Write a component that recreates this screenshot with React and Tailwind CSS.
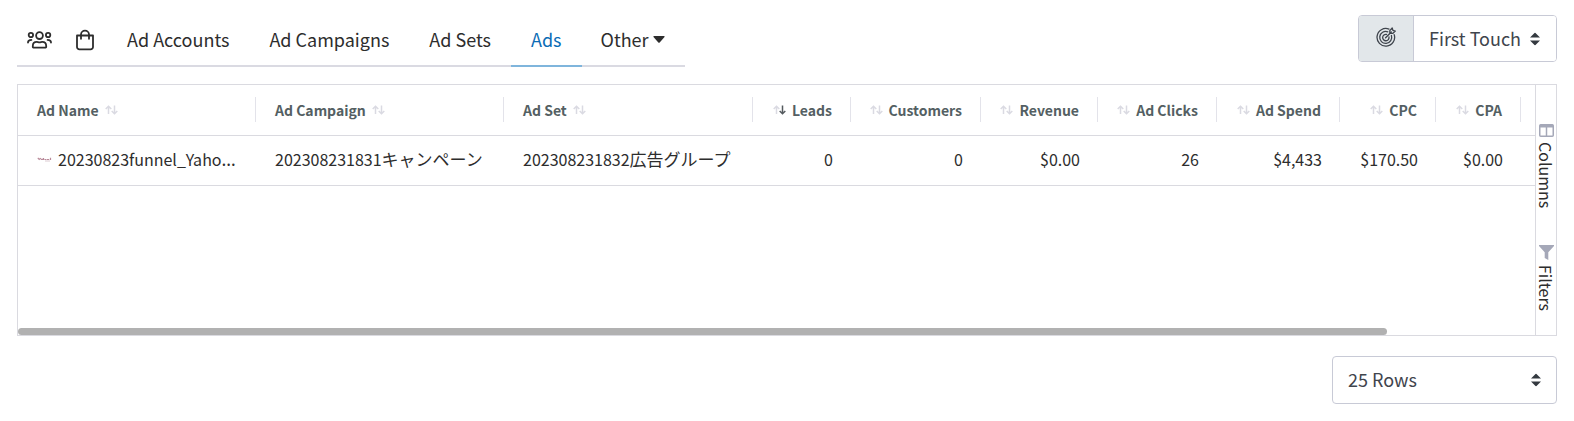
import React from 'react';
import clsx from 'clsx';

const tabs = ['Ad Accounts', 'Ad Campaigns', 'Ad Sets', 'Ads'];

const columns = [
    { label: 'Ad Name', width: 'w-[238px]' },
    { label: 'Ad Campaign', width: 'w-[248px]' },
    { label: 'Ad Set', width: 'w-[249px]' },
    { label: 'Leads', width: 'w-[98px]', numeric: true, sorted: true },
    { label: 'Customers', width: 'w-[130px]', numeric: true },
    { label: 'Revenue', width: 'w-[117px]', numeric: true },
    { label: 'Ad Clicks', width: 'w-[119px]', numeric: true },
    { label: 'Ad Spend', width: 'w-[123px]', numeric: true },
    { label: 'CPC', width: 'w-[96px]', numeric: true },
    { label: 'CPA', width: 'w-[85px]', numeric: true },
];

const numbers = ['0', '0', '$0.00', '26', '$4,433', '$170.50', '$0.00'];

const UsersIcon = () => (
    <svg width="25" height="20" viewBox="0 0 25 20" fill="none" stroke="currentColor" strokeWidth="1.8" strokeLinecap="round" strokeLinejoin="round">
        <circle cx="12.5" cy="5.6" r="3.4" />
        <circle cx="3.9" cy="5" r="2.2" />
        <circle cx="21.1" cy="5" r="2.2" />
        <path d="M6.3 17.6c-.3 0-.5-.2-.5-.5v-1.2c0-2.3 1.7-4 4-4 1 0 1.6.4 2.7.4s1.7-.4 2.7-.4c2.3 0 4 1.7 4 4v1.2c0 .3-.2.5-.5.5z" />
        <path d="M1 12.6c0-1.6 1.2-2.7 3.4-2.7M24 12.6c0-1.6-1.2-2.7-3.4-2.7" />
    </svg>
);

const BagIcon = () => (
    <svg width="20" height="22" viewBox="0 0 20 22" fill="none" stroke="currentColor" strokeWidth="1.8" strokeLinecap="round" strokeLinejoin="round">
        <path d="M2 6.500h16v11.500a2.400 2.400 0 0 1-2.400 2.400H4.400A2.400 2.400 0 0 1 2 18z" />
        <path d="M6 9.800V5.600a4 4 0 0 1 8 0v4.200" />
    </svg>
);

const TargetIcon = () => (
    <svg width="20" height="20" viewBox="0 0 20 20" fill="none" stroke="currentColor" strokeWidth="1.3" strokeLinecap="round" strokeLinejoin="round">
        <path d="M13 2.100A8.800 8.800 0 1 0 18.200 7.600" />
        <path d="M11.800 4.800A6 6 0 1 0 15.400 8.500" />
        <path d="M10.500 7.400A3.200 3.200 0 1 0 13 10" />
        <path d="M9.600 10.800 15.300 5M13.800 6.400V3.600L16.200 1l.7 2.300 2.400.7-2.600 2.400z" />
    </svg>
);

const SortIcon = ({ sorted }) => (
    <svg width="13" height="10" viewBox="0 0 13 10" fill="none" strokeWidth="1.5" className="shrink-0">
        <path d="M3.500 9V1.300M.7 4l2.800-2.800L6.300 4" stroke="#dadae2" />
        <path d="M9.500.5v8.200M6.700 6l2.800 2.800L12.300 6" stroke={sorted ? '#545a5e' : '#dadae2'} />
    </svg>
);

const YahooIcon = () => (
    <svg width="15" height="5" viewBox="0 0 15 5" fill="none" stroke="#b98a9a" strokeWidth="1.2" className="shrink-0">
        <path d="M.8.8l1.400 1.700 1.500-1.400M3.800 2.400h2.400M6.500.9v2.200M7.500 2.500h2M10 2.500h2.200M13.500.7v2.400" />
        <path d="M8 4h5" stroke="#dccbd2" strokeWidth="1" />
    </svg>
);

const ColumnsIcon = () => (
    <svg width="15" height="13" viewBox="0 0 15 13" fill="none" stroke="#a5a8b8" className="shrink-0">
        <rect x=".75" y=".75" width="13.5" height="11.5" rx="1" strokeWidth="1.5" />
        <path d="M1 2h13" strokeWidth="3" />
        <path d="M7.500 2v10" strokeWidth="1.5" />
    </svg>
);

const FilterIcon = () => (
    <svg width="15" height="15" viewBox="0 0 15 15" fill="#a5a8b8" className="shrink-0">
        <path d="M0 0h15v1L9.300 7.200V15L5.700 13V7.200L0 1z" />
    </svg>
);

const SelectArrows = () => (
    <svg width="10" height="13" viewBox="0 0 10 13" fill="#343a40" className="pointer-events-none absolute top-1/2 right-4 -translate-y-1/2">
        <path d="M5 0l5 5H0zM5 13l5-5H0z" />
    </svg>
);

const HeaderCell = ({ label, width, numeric, sorted }) => (
    <th scope="col" className={clsx('h-[50px] p-0', width)}>
        <div
            className={clsx(
                'flex h-[25px] items-center gap-1.5 border-r border-[#e3e3ea] px-[18px]',
                numeric ? 'flex-row-reverse' : 'pl-[19px]'
            )}
        >
            <span className="text-sm leading-5 font-bold text-[#545f63]">{label}</span>
            <SortIcon sorted={sorted} />
        </div>
    </th>
);

const App = () => {
    return (
        <div className="bg-white px-[17px] pt-[15px] pb-4 font-['Noto_Sans_CJK_JP',sans-serif] text-[#2d2d2d]">
            <div className="flex items-start justify-between">
                <nav className="flex h-[52px] border-b-2 border-[#dadae2] text-lg leading-6">
                    <button aria-label="Contacts" className="flex h-[50px] w-[45px] items-center justify-center">
                        <UsersIcon />
                    </button>
                    <button aria-label="Products" className="flex h-[50px] w-[45px] items-center justify-center">
                        <BagIcon />
                    </button>
                    {tabs.map((tab) => (
                        <a
                            key={tab}
                            href="#"
                            className={clsx(
                                'flex h-[52px] items-center border-b-2 px-5 pb-0.5',
                                tab === 'Ads' ? 'border-[#7fb5dc] text-[#0b6cb5]' : 'border-transparent'
                            )}
                        >
                            {tab}
                        </a>
                    ))}
                    <button className="flex h-[50px] items-center gap-1 pr-5 pl-[19px] pb-0.5">
                        Other
                        <svg width="12" height="7" viewBox="0 0 12 7" fill="currentColor">
                            <path d="M1 0h10q1 0 .5.900L6.700 6.500q-.7.700-1.400 0L.5.900Q0 0 1 0z" />
                        </svg>
                    </button>
                </nav>

                <div className="flex h-[47px] overflow-hidden rounded border border-[#c8cad6] text-[#3f454d]">
                    <label htmlFor="attribution" aria-label="Attribution" className="flex w-[55px] items-center justify-center border-r border-[#c8cad6] bg-[#e2e7ea] pb-1">
                        <TargetIcon />
                    </label>
                    <div className="relative w-[142px]">
                        <select id="attribution" className="h-full w-full appearance-none bg-white pb-0.5 pl-[15px] text-lg leading-6">
                            <option>First Touch</option>
                        </select>
                        <SelectArrows />
                    </div>
                </div>
            </div>

            <div className="mt-[17px] flex h-[252px] border border-[#dadae0]">
                <div className="flex min-w-0 flex-1 flex-col justify-between overflow-hidden">
                    <table className="w-full table-fixed border-collapse">
                        <thead>
                            <tr className="border-b border-[#dadae0]">
                                {columns.map((column) => (
                                    <HeaderCell key={column.label} {...column} />
                                ))}
                                <td />
                            </tr>
                        </thead>
                        <tbody>
                            <tr className="h-[50px] border-b border-[#dadae0] text-base leading-6">
                                <td className="pt-0 pr-0 pb-0.5 pl-[19px]">
                                    <div className="flex items-center gap-1.5">
                                        <YahooIcon />
                                        <span className="whitespace-nowrap">
                                            20230823funnel_Yaho<span className="font-['Noto_Sans',sans-serif] text-lg leading-6">…</span>
                                        </span>
                                    </div>
                                </td>
                                <td className="px-[19px] pt-0 pb-0.5 whitespace-nowrap">
                                    202308231831<span className="text-[17px]">キャンペーン</span>
                                </td>
                                <td className="px-[19px] pt-0 pb-0.5 whitespace-nowrap">
                                    202308231832<span className="text-[17px]">広告グループ</span>
                                </td>
                                {numbers.map((value, index) => (
                                    <td key={index} className="pt-0 pr-[18px] pb-0.5 text-right">
                                        {value}
                                    </td>
                                ))}
                                <td />
                            </tr>
                        </tbody>
                    </table>
                    <div className="mr-[148px] h-[7px] rounded-full bg-[#b1b1b1]" />
                </div>

                <div className="flex w-[21px] shrink-0 flex-col items-center gap-[37px] border-l border-[#dadae0] pt-[39px] text-base leading-5">
                    <button className="flex flex-col items-center gap-[5px]">
                        <ColumnsIcon />
                        <span className="[writing-mode:vertical-rl]">Columns</span>
                    </button>
                    <button className="flex flex-col items-center gap-[5px]">
                        <FilterIcon />
                        <span className="[writing-mode:vertical-rl]">Filters</span>
                    </button>
                </div>
            </div>

            <div className="mt-5 flex justify-end">
                <div className="relative h-12 w-[225px]">
                    <select aria-label="Rows per page" className="h-full w-full appearance-none rounded border border-[#c8cad6] bg-white pb-0.5 pl-[15px] text-lg leading-6 text-[#3f454d]">
                        <option>25 Rows</option>
                    </select>
                    <SelectArrows />
                </div>
            </div>
        </div>
    );
};

export default App;
